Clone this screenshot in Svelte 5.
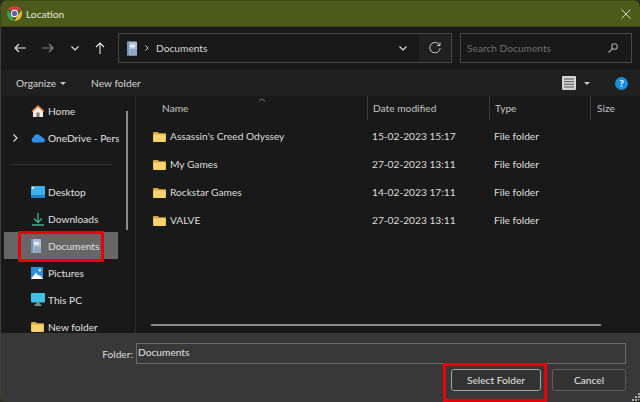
<script>
  const nav = [
    { label: "Home", icon: "home" },
    { label: "OneDrive - Personal", icon: "cloud", expand: true },
    { divider: true },
    { label: "Desktop", icon: "desktop", pin: true },
    { label: "Downloads", icon: "down", pin: true },
    { label: "Documents", icon: "docs", pin: true, selected: true },
    { label: "Pictures", icon: "pics", pin: true },
    { label: "This PC", icon: "pc", pin: true },
    { label: "New folder", icon: "folder" },
  ];
  const files = [
    { name: "Assassin's Creed Odyssey", date: "15-02-2023 15:17" },
    { name: "My Games", date: "27-02-2023 13:11" },
    { name: "Rockstar Games", date: "14-02-2023 17:11" },
    { name: "VALVE", date: "27-02-2023 13:11" },
  ];
</script>

{#snippet folder()}
  <svg class="ico" viewBox="0 0 14 12" width="13" height="11">
    <path d="M0 2a1 1 0 0 1 1-1h4l1.500 1.500H14V4H0z" fill="#d9a93f" />
    <path d="M0 3.500h13a1 1 0 0 1 1 1V11a1 1 0 0 1-1 1H1a1 1 0 0 1-1-1z" fill="#fbd46e" />
  </svg>
{/snippet}

{#snippet docIcon(w, h)}
  <svg viewBox="0 0 10 14" width={w} height={h}>
    <rect x="0" y="0" width="10" height="14" rx="1" fill="#a9bdd6" />
    <rect x="0" y="0" width="2" height="14" fill="#7c93b3" />
    <rect x="3" y="3" width="5" height="3" fill="#e4ecf5" />
    <rect x="3" y="8" width="7" height="6" fill="#8fa6c4" />
  </svg>
{/snippet}

{#snippet navIcon(kind)}
  {#if kind === "home"}
    <svg viewBox="0 0 14 14" width="14" height="14">
      <path d="M2 6.500 7 2l5 4.500V13H2z" fill="#f3ece2" />
      <path d="M0.500 7 7 1l6.500 6-1 1L7 3 1.500 8z" fill="#e2733a" />
      <rect x="5.500" y="8.500" width="3" height="4.500" fill="#8a7a6e" />
    </svg>
  {:else if kind === "cloud"}
    <svg viewBox="0 0 14 10" width="14" height="10">
      <path d="M3 9.500a2.700 2.700 0 0 1-.4-5.300A3.600 3.600 0 0 1 9.300 3a2.900 2.900 0 0 1 2.300 1.700A2.400 2.400 0 0 1 11.500 9.500z" fill="#2f8fe6" />
    </svg>
  {:else if kind === "desktop"}
    <svg viewBox="0 0 14 12" width="14" height="12">
      <rect width="14" height="12" rx="1" fill="#3fb0ea" />
      <rect x="0" y="9" width="14" height="3" fill="#1d80c8" />
      <rect x="1" y="1" width="2" height="2" fill="#d7f0ff" />
    </svg>
  {:else if kind === "down"}
    <svg viewBox="0 0 14 14" width="14" height="14" fill="none" stroke="#3fb48a" stroke-width="1.300">
      <path d="M7 1v9M3 6.500 7 10.500l4-4M1 13h12" />
    </svg>
  {:else if kind === "docs"}
    {@render docIcon(10, 14)}
  {:else if kind === "pics"}
    <svg viewBox="0 0 12 12" width="12" height="12">
      <rect width="12" height="12" fill="#2b8fe0" />
      <path d="M0 12 5 5.500 8 9l1-1 3 4z" fill="#fff" />
      <circle cx="8.800" cy="3.200" r="1.200" fill="#fff" />
    </svg>
  {:else if kind === "pc"}
    <svg viewBox="0 0 14 13" width="14" height="13">
      <rect width="14" height="9.500" rx="1" fill="#42c3e6" />
      <rect x="5.500" y="9.500" width="3" height="2" fill="#7aa8b8" />
      <rect x="3.500" y="11.500" width="7" height="1.200" fill="#9cc4d2" />
    </svg>
  {:else}
    {@render folder()}
  {/if}
{/snippet}

<div class="win">
  <header class="title">
    <svg class="logo" viewBox="0 0 14 14" width="15" height="15">
      <path d="M7 0a7 7 0 0 1 6.400 4H7z" fill="#d6453b" />
      <path d="M13.400 4A7 7 0 0 1 7 14l3-5z" fill="#e8b83a" />
      <path d="M7 14A7 7 0 0 1 1 3.500L4 9z" fill="#3ea653" />
      <path d="M1 3.500A7 7 0 0 1 7 0v4z" fill="#d6453b" />
      <circle cx="7" cy="7" r="3.400" fill="#fff" />
      <circle cx="7" cy="7" r="2.500" fill="#6b5bb5" />
    </svg>
    <span>Location</span>
    <svg class="close" viewBox="0 0 10 10" width="10" height="10" stroke="#e8e8e0" stroke-width="0.900">
      <path d="M.5.500l9 9M9.500.500l-9 9" />
    </svg>
  </header>

  <div class="toolbar">
    <div class="arrows">
      <svg viewBox="0 0 12 10" width="12" height="10" fill="none" stroke="#e6e6e6" stroke-width="1.100"><path d="M12 5H1M5 1 1 5l4 4" /></svg>
      <svg viewBox="0 0 12 10" width="12" height="10" fill="none" stroke="#8a8a8a" stroke-width="1.100"><path d="M0 5h11M7 1l4 4-4 4" /></svg>
      <svg viewBox="0 0 8 5" width="8" height="5" fill="none" stroke="#e6e6e6" stroke-width="1.100"><path d="M.5.500 4 4 7.500.500" /></svg>
      <svg viewBox="0 0 10 12" width="10" height="12" fill="none" stroke="#e6e6e6" stroke-width="1.100"><path d="M5 12V1M1 5l4-4 4 4" /></svg>
    </div>
    <div class="address">
      {@render docIcon(10, 15)}
      <svg class="crumb" viewBox="0 0 4 6" width="4" height="6" fill="none" stroke="#ddd"><path d="M.5.500 3 3 .5 5.500" /></svg>
      <span>Documents</span>
      <svg class="drop" viewBox="0 0 8 5" width="8" height="5" fill="none" stroke="#e6e6e6" stroke-width="1.100"><path d="M.5.500 4 4 7.500.500" /></svg>
      <div class="refresh">
        <svg viewBox="0 0 12 12" width="12" height="12" fill="none" stroke="#cfcfcf" stroke-width="1"><path d="M10.500 3A5.200 5.200 0 1 0 11.200 6" /><path d="M11 .5V3.500H8" /></svg>
      </div>
    </div>
    <div class="search">
      <span>Search Documents</span>
      <svg viewBox="0 0 10 10" width="10" height="10" fill="none" stroke="#a8a8a8" stroke-width="1.100"><circle cx="6.500" cy="3.500" r="2.800" /><path d="M4.500 5.500.5 9.500" /></svg>
    </div>
  </div>

  <div class="commands">
    <span class="org">Organize<i class="caret"></i></span>
    <span>New folder</span>
    <div class="cmd-right">
      <svg viewBox="0 0 14 14" width="14" height="14"><rect width="14" height="14" rx="1" fill="#d4d4d4" /><path d="M2 3h10M2 5.700h10M2 8.300h10M2 11h10" stroke="#555" /></svg>
      <i class="caret view"></i>
      <span class="help">?</span>
    </div>
  </div>

  <div class="main">
    <nav class="side">
      {#each nav as item}
        {#if item.divider}
          <div class="divider"><hr /></div>
        {:else}
          <div class="nav-row" class:selected={item.selected}>
            <span class="exp">
              {#if item.expand}
                <svg viewBox="0 0 5 8" width="5" height="8" fill="none" stroke="#e6e6e6" stroke-width="1.100"><path d="M.5.500 4 4 .5 7.500" /></svg>
              {/if}
            </span>
            <span class="nav-ico">{@render navIcon(item.icon)}</span>
            <span class="nav-label">{item.label}</span>
            {#if item.pin}
              <svg class="pin" viewBox="0 0 10 10" width="10" height="10" fill="#9a9a9a"><path d="M6 .5 9.500 4 8.500 4.500 6.500 6.500 6 8.500 1.500 4 3.500 3.500 5.500 1.500zM3 6l1 1-3 2.500z" /></svg>
            {/if}
          </div>
        {/if}
      {/each}
      <div class="vbar"></div>
    </nav>
    <section class="list">
      <div class="head">
        <i class="sort"></i>
        <span class="c1">Name</span>
        <span class="c2">Date modified</span>
        <span class="c3">Type</span>
        <span class="c4">Size</span>
      </div>
      {#each files as f}
        <div class="file">
          <span class="c1">{@render folder()}{f.name}</span>
          <span class="c2">{f.date}</span>
          <span class="c3">File folder</span>
        </div>
      {/each}
      <div class="hbar"></div>
    </section>
  </div>

  <footer class="bottom">
    <div class="folder-row">
      <label for="fname">Folder:</label>
      <input id="fname" value="Documents" />
    </div>
    <div class="buttons">
      <button class="primary">Select Folder</button>
      <button>Cancel</button>
    </div>
    <svg class="grip" viewBox="0 0 8 8" width="8" height="8" fill="#aaa"><path d="M6 0h2v2H6zM3 3h2v2H3zM6 3h2v2H6zM0 6h2v2H0zM3 6h2v2H3zM6 6h2v2H6z" /></svg>
  </footer>

  <div class="mark mark-nav"></div>
  <div class="mark mark-btn"></div>
</div>

<style>
  :global(body) {
    margin: 0;
    background: #2a2e22;
  }
  .win {
    position: relative;
    width: 640px;
    height: 402px;
    display: flex;
    flex-direction: column;
    overflow: hidden;
    box-sizing: border-box;
    border-radius: 7px 7px 5px 5px;
    border-left: 1px solid #3c4528;
    background: #191919;
    color: #dcdcdc;
    font-family: Lato, "Noto Sans", sans-serif;
    font-size: 10.200px;
  }
  .title {
    height: 27px;
    flex: none;
    box-sizing: border-box;
    display: flex;
    align-items: center;
    gap: 4px;
    padding: 0 9px 0 6px;
    background: #4c5b1a;
    border-top: 1px solid #3e4a16;
    border-bottom: 1px solid #39431a;
    color: #e6e8da;
  }
  .logo {
    flex: none;
  }
  .close {
    margin-left: auto;
  }
  .toolbar {
    height: 43px;
    flex: none;
    display: flex;
    align-items: center;
    padding: 0 8px 1px 0;
    box-sizing: border-box;
  }
  .arrows {
    width: 117px;
    flex: none;
    box-sizing: border-box;
    padding: 0 13px 0 13px;
    display: flex;
    align-items: center;
    justify-content: space-between;
  }
  .address {
    width: 334px;
    height: 30px;
    flex: none;
    box-sizing: border-box;
    border: 1px solid #484848;
    display: flex;
    align-items: center;
    padding-left: 8px;
    color: #d8d8d8;
  }
  .crumb {
    margin: 0 7px 0 8px;
  }
  .drop {
    margin-left: auto;
    margin-right: 12px;
  }
  .refresh {
    width: 32px;
    height: 100%;
    background: #202020;
    display: flex;
    align-items: center;
    justify-content: center;
  }
  .search {
    width: 172px;
    height: 30px;
    flex: none;
    margin-left: 8px;
    box-sizing: border-box;
    border: 1px solid #484848;
    display: flex;
    align-items: center;
    justify-content: space-between;
    padding: 0 13px 0 6px;
    color: #6f6f6f;
  }
  .commands {
    height: 26px;
    flex: none;
    display: flex;
    align-items: center;
    gap: 25px;
    padding: 0 12px 0 15px;
    background: #202020;
    color: #d4d4d4;
  }
  .org {
    display: flex;
    align-items: center;
    gap: 4px;
  }
  .caret {
    width: 0;
    height: 0;
    border: 3px solid transparent;
    border-top: 3px solid #c8c8c8;
    border-bottom: 0;
  }
  .cmd-right {
    margin-left: auto;
    display: flex;
    align-items: center;
  }
  .view {
    margin: 0 0 0 8px;
    border-width: 3px 3.500px 0;
  }
  .help {
    width: 13px;
    height: 13px;
    margin-left: 25px;
    border-radius: 50%;
    background: #1a8ee0;
    color: #fff;
    font-size: 10px;
    font-weight: 700;
    line-height: 13px;
    text-align: center;
  }
  .main {
    flex: 1;
    min-height: 0;
    display: flex;
  }
  .side {
    position: relative;
    width: 135px;
    flex: none;
    box-sizing: border-box;
    padding: 1px 0 0 3px;
    border-right: 1px solid #2c2c2c;
    overflow: hidden;
  }
  .nav-row {
    width: 114px;
    height: 27px;
    display: flex;
    align-items: center;
    white-space: nowrap;
    color: #e0e0e0;
  }
  .nav-row.selected {
    background: #666666;
  }
  .exp {
    width: 9px;
    padding-left: 9px;
    flex: none;
    display: flex;
  }
  .nav-ico {
    width: 17px;
    padding-left: 9px;
    flex: none;
    display: flex;
    justify-content: flex-start;
  }
  .nav-ico :global(svg) {
    display: block;
  }
  .nav-label {
    width: 71px;
    overflow: hidden;
    flex: none;
  }
  .divider {
    height: 27px;
    display: flex;
    align-items: center;
    width: 114px;
  }
  .divider hr {
    width: 102px;
    margin: 0 0 0 7px;
    border: 0;
    border-top: 1px solid #333;
  }
  .vbar {
    position: absolute;
    left: 125px;
    top: 15px;
    width: 2px;
    height: 119px;
    background: #8c8c8c;
  }
  .list {
    position: relative;
    flex: 1;
    min-width: 0;
  }
  .head {
    position: relative;
    height: 24px;
    display: flex;
    align-items: center;
    color: #c4c4c4;
  }
  .sort {
    position: absolute;
    left: 123px;
    top: 2px;
    width: 5px;
    height: 5px;
    border-left: 1px solid #777;
    border-top: 1px solid #777;
    transform: scale(0.8, 0.6) rotate(45deg);
  }
  .c1 {
    width: 231px;
    flex: none;
    box-sizing: border-box;
    padding-left: 26px;
    display: flex;
    align-items: center;
    gap: 4px;
  }
  .c2 {
    width: 122px;
    flex: none;
    box-sizing: border-box;
    padding-left: 5px;
  }
  .c3 {
    width: 101px;
    flex: none;
    box-sizing: border-box;
    padding-left: 5px;
  }
  .c4 {
    flex: 1;
    box-sizing: border-box;
    padding-left: 6px;
  }
  .head .c2,
  .head .c3,
  .head .c4 {
    border-left: 1px solid #3a3a3a;
    height: 24px;
    line-height: 24px;
  }
  .file {
    height: 28px;
    display: flex;
    align-items: center;
    color: #dedede;
    position: relative;
    top: 2px;
  }
  .file .c1 {
    padding-left: 17px;
  }
  .ico {
    flex: none;
    display: block;
  }
  .hbar {
    position: absolute;
    left: 15px;
    top: 228px;
    width: 450px;
    height: 2px;
    background: #8c8c8c;
  }
  .bottom {
    position: relative;
    height: 69px;
    flex: none;
    box-sizing: border-box;
    background: #383838;
    padding: 10px 14px 0 0;
  }
  .folder-row {
    display: flex;
    align-items: center;
    justify-content: flex-end;
    gap: 3px;
  }
  .folder-row label {
    color: #dcdcdc;
  }
  input {
    width: 490px;
    height: 21px;
    box-sizing: border-box;
    margin: 0;
    padding: 0 1px 3px 1px;
    background: #383838;
    border: 1px solid #6a6a6a;
    color: #e0e0e0;
    font: inherit;
    outline: none;
  }
  .buttons {
    display: flex;
    justify-content: flex-end;
    gap: 11px;
    margin-top: 5px;
  }
  button {
    width: 74px;
    height: 22px;
    padding: 0;
    box-sizing: border-box;
    border: 1px solid #5c5c5c;
    border-radius: 3px;
    background: #333333;
    color: #e4e4e4;
    font: inherit;
  }
  .primary {
    width: 90px;
    border-color: #a6a6a6;
  }
  .grip {
    position: absolute;
    right: 0;
    bottom: 1px;
  }
  .mark {
    position: absolute;
    box-sizing: border-box;
    border: 3px solid #e6000c;
  }
  .mark-nav {
    left: 17px;
    top: 231px;
    width: 86px;
    height: 31px;
  }
  .mark-btn {
    left: 442px;
    top: 363px;
    width: 104px;
    height: 39px;
  }
</style>
